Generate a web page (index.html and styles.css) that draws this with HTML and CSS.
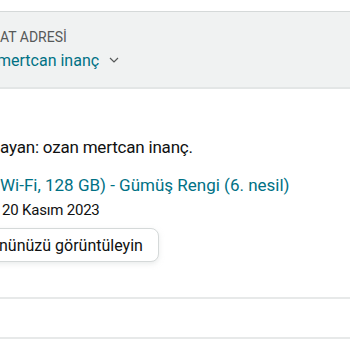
FILE: index.html
```html
<!DOCTYPE html>
<html lang="tr">

<head>
  <meta charset="UTF-8">
  <title>Sipariş Ayrıntıları</title>
  <link rel="stylesheet" href="styles.css">
</head>

<body>
  <!-- Delivery address strip -->
  <div class="address-box">
    <div class="address-label">AT ADRESİ</div>
    <div class="address-name">
      <span class="name-text">mertcan inanç</span>
      <svg class="chevron" width="10" height="6" viewBox="0 0 10 6">
        <path d="M1 1 L5 5 L9 1" fill="none" stroke="#565959" stroke-width="1.2" />
      </svg>
    </div>
  </div>

  <!-- Delivery details -->
  <div class="details">
    <div class="signed">ayan: ozan mertcan inanç.</div>
    <div class="product-title">Wi-Fi, 128 GB) - Gümüş Rengi (6. nesil)</div>
    <div class="return-date">20 Kasım 2023</div>
    <button class="view-btn">nünüzü görüntüleyin</button>
  </div>

  <div class="divider"></div>
  <div class="divider"></div>
</body>

</html>
```

FILE: styles.css
```css
body {
  font-family: Roboto, 'Noto Sans', sans-serif;
  margin: 0;
  padding: 0;
  width: 350px;
  height: 350px;
  overflow: hidden;
  background-color: #fff;
  color: #0f1111;
}

/* Address strip */
.address-box {
  margin-top: 11px;
  border-top: 1px solid #d5d9d9;
  border-bottom: 2px solid #e3e6e6;
  background-color: #f0f2f2;
  padding: 15px 0 14px 0;
}

.address-label {
  font-size: 14px;
  line-height: 20px;
  color: #565959;
}

.address-name {
  display: flex;
  align-items: center;
  gap: 10px;
  margin-top: 2px;
  font-size: 16px;
  line-height: 24px;
  color: #007185;
}

.name-text {
  margin-left: -3px;
}

.chevron {
  margin-top: -3px;
}

/* Details */
.details {
  padding-top: 46px;
}

.signed {
  font-size: 17px;
  line-height: 24px;
  letter-spacing: -0.2px;
}

.product-title {
  margin-top: 14px;
  font-size: 17px;
  line-height: 24px;
  color: #007185;
}

.return-date {
  margin-top: 2px;
  margin-left: 2px;
  font-size: 15px;
  line-height: 22px;
  letter-spacing: -0.2px;
}

.view-btn {
  display: block;
  margin-top: 7px;
  margin-left: -12px;
  padding: 0 15px 0 10px;
  height: 34px;
  font-family: inherit;
  font-size: 16px;
  color: #0f1111;
  background-color: #fff;
  border: 1px solid #d5d9d9;
  border-radius: 8px;
  box-shadow: 0 2px 5px rgba(213, 217, 217, 0.5);
}

.divider {
  margin-top: 35px;
  border-top: 2px solid #e7e9e9;
}

.divider + .divider {
  margin-top: 38px;
}
```
